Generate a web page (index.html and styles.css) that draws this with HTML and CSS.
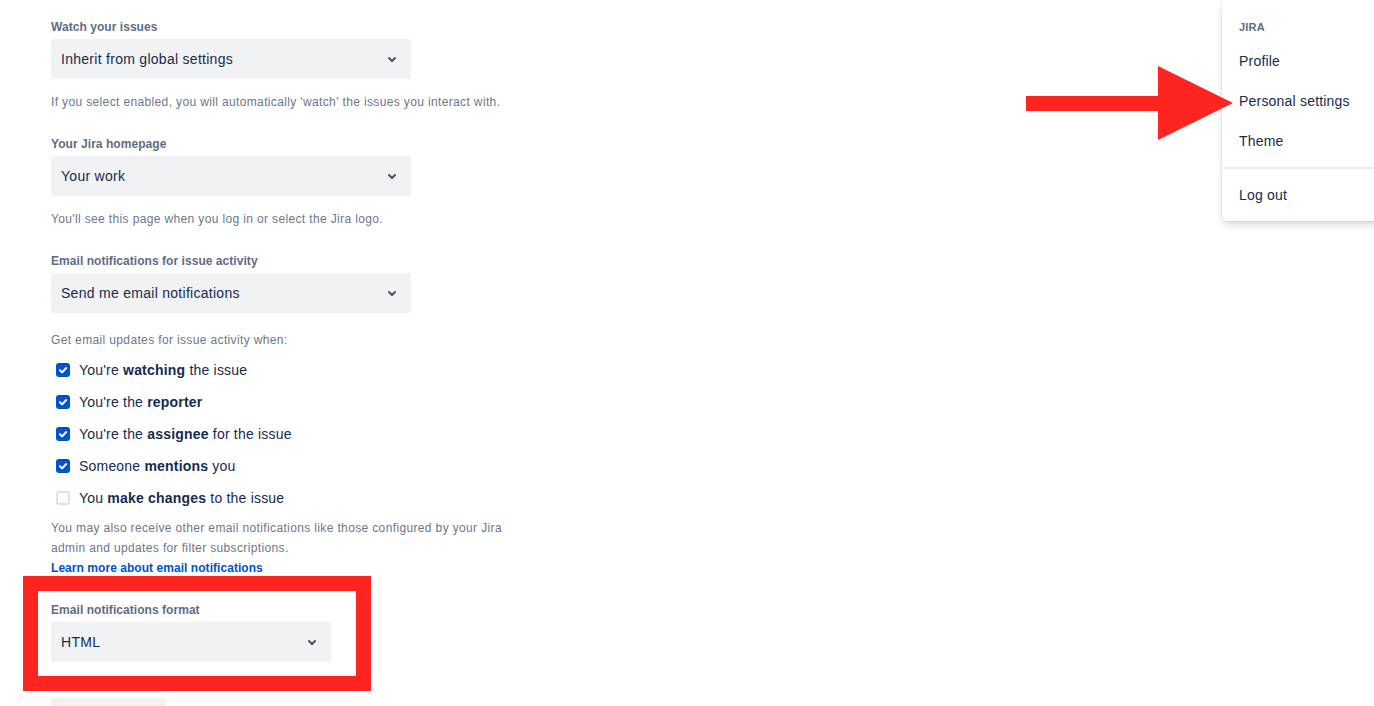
FILE: index.html
```html
<!DOCTYPE html>
<html lang="en">
<head>
    <meta charset="UTF-8">
    <meta name="viewport" content="width=device-width, initial-scale=1.0">
    <title>Personal settings</title>
    <link rel="stylesheet" href="styles.css">
</head>
<body>
    <div class="settings">
        <div class="field">
            <label class="label">Watch your issues</label>
            <div class="select">
                <span>Inherit from global settings</span>
                <svg class="chevron" viewBox="0 0 24 24"><path d="M8.292 10.293a1.009 1.009 0 000 1.419l2.939 2.965c.218.215.5.322.779.322s.556-.107.769-.322l2.93-2.955a1.01 1.01 0 000-1.419.987.987 0 00-1.406 0l-2.298 2.317-2.307-2.327a.99.99 0 00-1.406 0z"/></svg>
            </div>
            <p class="help">If you select enabled, you will automatically 'watch' the issues you interact with.</p>
        </div>

        <div class="field">
            <label class="label">Your Jira homepage</label>
            <div class="select">
                <span>Your work</span>
                <svg class="chevron" viewBox="0 0 24 24"><path d="M8.292 10.293a1.009 1.009 0 000 1.419l2.939 2.965c.218.215.5.322.779.322s.556-.107.769-.322l2.93-2.955a1.01 1.01 0 000-1.419.987.987 0 00-1.406 0l-2.298 2.317-2.307-2.327a.99.99 0 00-1.406 0z"/></svg>
            </div>
            <p class="help">You'll see this page when you log in or select the Jira logo.</p>
        </div>

        <div class="field notify">
            <label class="label">Email notifications for issue activity</label>
            <div class="select">
                <span>Send me email notifications</span>
                <svg class="chevron" viewBox="0 0 24 24"><path d="M8.292 10.293a1.009 1.009 0 000 1.419l2.939 2.965c.218.215.5.322.779.322s.556-.107.769-.322l2.93-2.955a1.01 1.01 0 000-1.419.987.987 0 00-1.406 0l-2.298 2.317-2.307-2.327a.99.99 0 00-1.406 0z"/></svg>
            </div>
            <p class="help intro">Get email updates for issue activity when:</p>
            <div class="checks">
                <div class="check">
                    <span class="box on"><svg viewBox="0 0 14 14"><path d="M4 7.3l2.1 2.1L10.2 5"/></svg></span>
                    <span>You're <b>watching</b> the issue</span>
                </div>
                <div class="check">
                    <span class="box on"><svg viewBox="0 0 14 14"><path d="M4 7.3l2.1 2.1L10.2 5"/></svg></span>
                    <span>You're the <b>reporter</b></span>
                </div>
                <div class="check">
                    <span class="box on"><svg viewBox="0 0 14 14"><path d="M4 7.3l2.1 2.1L10.2 5"/></svg></span>
                    <span>You're the <b>assignee</b> for the issue</span>
                </div>
                <div class="check">
                    <span class="box on"><svg viewBox="0 0 14 14"><path d="M4 7.3l2.1 2.1L10.2 5"/></svg></span>
                    <span>Someone <b>mentions</b> you</span>
                </div>
                <div class="check">
                    <span class="box"></span>
                    <span>You <b>make changes</b> to the issue</span>
                </div>
            </div>
            <p class="help note">You may also receive other email notifications like those configured by your Jira admin and updates for filter subscriptions.</p>
            <a class="learn" href="#">Learn more about email notifications</a>
        </div>

        <div class="field highlight">
            <label class="label">Email notifications format</label>
            <div class="select small">
                <span>HTML</span>
                <svg class="chevron" viewBox="0 0 24 24"><path d="M8.292 10.293a1.009 1.009 0 000 1.419l2.939 2.965c.218.215.5.322.779.322s.556-.107.769-.322l2.93-2.955a1.01 1.01 0 000-1.419.987.987 0 00-1.406 0l-2.298 2.317-2.307-2.327a.99.99 0 00-1.406 0z"/></svg>
            </div>
        </div>

        <button class="save"></button>
    </div>

    <div class="menu">
        <div class="menu-heading">Jira</div>
        <a class="menu-item" href="#">Profile</a>
        <a class="menu-item" href="#">Personal settings</a>
        <a class="menu-item" href="#">Theme</a>
        <div class="menu-divider"></div>
        <a class="menu-item" href="#">Log out</a>
    </div>

    <svg class="arrow" viewBox="0 0 208 75"><polygon points="0,30 132,30 132,0 207,37 132,74 132,45 0,45"/></svg>
</body>
</html>
```

FILE: styles.css
```css
* {
  margin: 0;
  padding: 0;
  box-sizing: border-box;
}
body {
  font-family: "Liberation Sans", Arial, sans-serif;
  color: #172b4d;
  background: #fff;
  overflow: hidden;
  --red: #fe2420;
}

.settings {
  padding: 18px 0 0 51px;
  width: 520px;
}
.field {
  margin-bottom: 25px;
}
.field.notify {
  margin-bottom: 0;
}
.label {
  display: block;
  font-size: 12px;
  line-height: 16px;
  font-weight: bold;
  color: #5e6c84;
  padding-top: 1px;
  margin-bottom: 4px;
  letter-spacing: 0.05px;
}
.select {
  display: flex;
  align-items: center;
  justify-content: space-between;
  width: 360px;
  height: 40px;
  padding: 0 7px 0 10px;
  background-color: #f1f2f4;
  border-radius: 3px;
  font-size: 14px;
  letter-spacing: 0.28px;
}
.select.small {
  width: 280px;
}
.chevron {
  width: 24px;
  height: 24px;
  fill: #42526e;
}
.help {
  font-size: 12px;
  line-height: 16px;
  color: #6b778c;
  margin-top: 15px;
  letter-spacing: 0.36px;
}
.help.intro {
  margin-top: 19px;
}

.checks {
  margin-top: 6px;
}
.check {
  display: flex;
  align-items: center;
  gap: 9px;
  height: 32px;
  padding-left: 5px;
  font-size: 14px;
  letter-spacing: 0.2px;
}
.check b {
  font-weight: bold;
}
.box {
  width: 14px;
  height: 14px;
  border-radius: 3px;
  border: 2px solid #dfe1e6;
  background-color: #fafbfc;
  display: flex;
}
.box.on {
  background-color: #0052cc;
  border-color: #0052cc;
}
.box svg {
  width: 14px;
  height: 14px;
  margin: -2px;
  fill: none;
  stroke: #fff;
  stroke-width: 2;
  stroke-linecap: round;
  stroke-linejoin: round;
}

.help.note {
  margin-top: 4px;
  line-height: 20px;
  width: 460px;
}
.learn {
  display: block;
  font-size: 12px;
  line-height: 20px;
  font-weight: bold;
  color: #0052cc;
  text-decoration: none;
  letter-spacing: 0.05px;
}

.highlight {
  margin: -2px 0 7px -28px;
  width: 348px;
  border: 15px solid var(--red);
  padding: 10px 25px 14px 13px;
}

.save {
  display: block;
  width: 115px;
  height: 32px;
  border: none;
  border-radius: 3px;
  background-color: #f1f2f4;
}

.menu {
  position: absolute;
  top: 0;
  right: -8px;
  width: 160px;
  padding: 19px 0 6px;
  background-color: #fff;
  border-radius: 0 0 4px 4px;
  box-shadow: 0 4px 8px -2px rgba(9, 30, 66, 0.25), 0 0 1px rgba(9, 30, 66, 0.31);
}
.menu-heading {
  padding: 0 17px;
  font-size: 11px;
  line-height: 16px;
  font-weight: bold;
  text-transform: uppercase;
  color: #5e6c84;
  margin-bottom: 6px;
  letter-spacing: 0.2px;
}
.menu-item {
  display: flex;
  align-items: center;
  height: 40px;
  padding: 0 17px;
  font-size: 14px;
  color: #172b4d;
  text-decoration: none;
  letter-spacing: 0.2px;
}
.menu-divider {
  height: 2px;
  background-color: #ebecf0;
  margin: 6px 0;
}

.arrow {
  position: absolute;
  left: 1026px;
  top: 66px;
  width: 208px;
  height: 75px;
  fill: var(--red);
}
```
